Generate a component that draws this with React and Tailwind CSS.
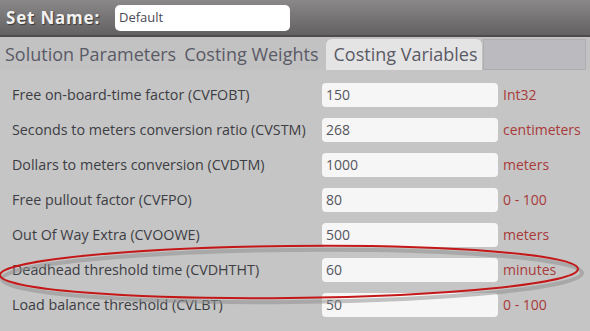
const ROWS = [
  { label: 'Free on-board-time factor (CVFOBT)', value: '150', unit: 'Int32' },
  { label: 'Seconds to meters conversion ratio (CVSTM)', value: '268', unit: 'centimeters' },
  { label: 'Dollars to meters conversion (CVDTM)', value: '1000', unit: 'meters' },
  { label: 'Free pullout factor (CVFPO)', value: '80', unit: '0 - 100' },
  { label: 'Out Of Way Extra (CVOOWE)', value: '500', unit: 'meters' },
  { label: 'Deadhead threshold time (CVDHTHT)', value: '60', unit: 'minutes' },
  { label: 'Load balance threshold (CVLBT)', value: '50', unit: '0 - 100' }
]

const TABS = ['Solution Parameters', 'Costing Weights', 'Costing Variables']

export default function App() {
  return (
    <div
      className="relative w-[590px] h-[331px] overflow-hidden bg-[#c5c5c5]"
      style={{ fontFamily: '"Open Sans", "DejaVu Sans", sans-serif' }}
    >
      {/* Header */}
      <div className="h-[37px] flex items-center pl-[6px] bg-gradient-to-b from-[#8a8888] to-[#636161] border-b-2 border-[#4d4b4b]">
        <span className="w-[109px] text-[17px] font-bold text-[#f2f2f2] tracking-[0.8px] [text-shadow:1px_1px_1px_#3a3a3a]">
          Set Name:
        </span>
        <div className="w-[175px] h-[26px] bg-white rounded-[5px] flex items-center pl-[4px] text-[13px] text-[#4a4a55]">
          Default
        </div>
      </div>

      {/* Tabs */}
      <div className="h-[33px] flex items-end pl-[2px] bg-[#c2c2c2]">
        {TABS.map((tab, i) => (
          <div
            key={tab}
            className={
              i === 2
                ? 'h-[31px] pl-[7px] pr-[4px] flex items-center bg-[#e4e4e4] rounded-t-[6px] text-[18px] text-[#5a5a66] ml-[3px]'
                : 'h-[31px] px-[3px] flex items-center text-[18px] text-[#5a5a66] mr-[2px]'
            }
          >
            {tab}
          </div>
        ))}
        <div className="flex-1 h-[31px] ml-[1px] mr-[4px] bg-[#bbbbbf] border border-[#aeaeb2]" />
      </div>

      {/* Rows */}
      <div className="pt-[7px] flex flex-col">
        {ROWS.map((row) => (
          <div key={row.label} className="h-[35px] flex items-center">
            <div className="w-[322px] pl-[12px] text-[14.3px] text-[#3d3d44]">{row.label}</div>
            <div className="w-[176px] h-[24px] bg-[#f6f6f6] rounded-[4px] flex items-center pl-[4px] text-[14px] text-[#55555e]">
              {row.value}
            </div>
            <div className="pl-[5px] text-[14px] text-[#a83a3a]">{row.unit}</div>
          </div>
        ))}
      </div>

      {/* Red annotation ellipse */}
      <svg className="absolute left-0 top-0 pointer-events-none" width="590" height="331" viewBox="0 0 590 331">
        <ellipse cx="292" cy="276" rx="290" ry="26" fill="none" stroke="#8c8c8c" strokeWidth="4" opacity="0.5" transform="rotate(-0.6 292 276)" />
        <ellipse cx="289" cy="272" rx="289" ry="26" fill="none" stroke="#c41818" strokeWidth="2" transform="rotate(-0.6 289 272)" />
      </svg>
    </div>
  )
}
